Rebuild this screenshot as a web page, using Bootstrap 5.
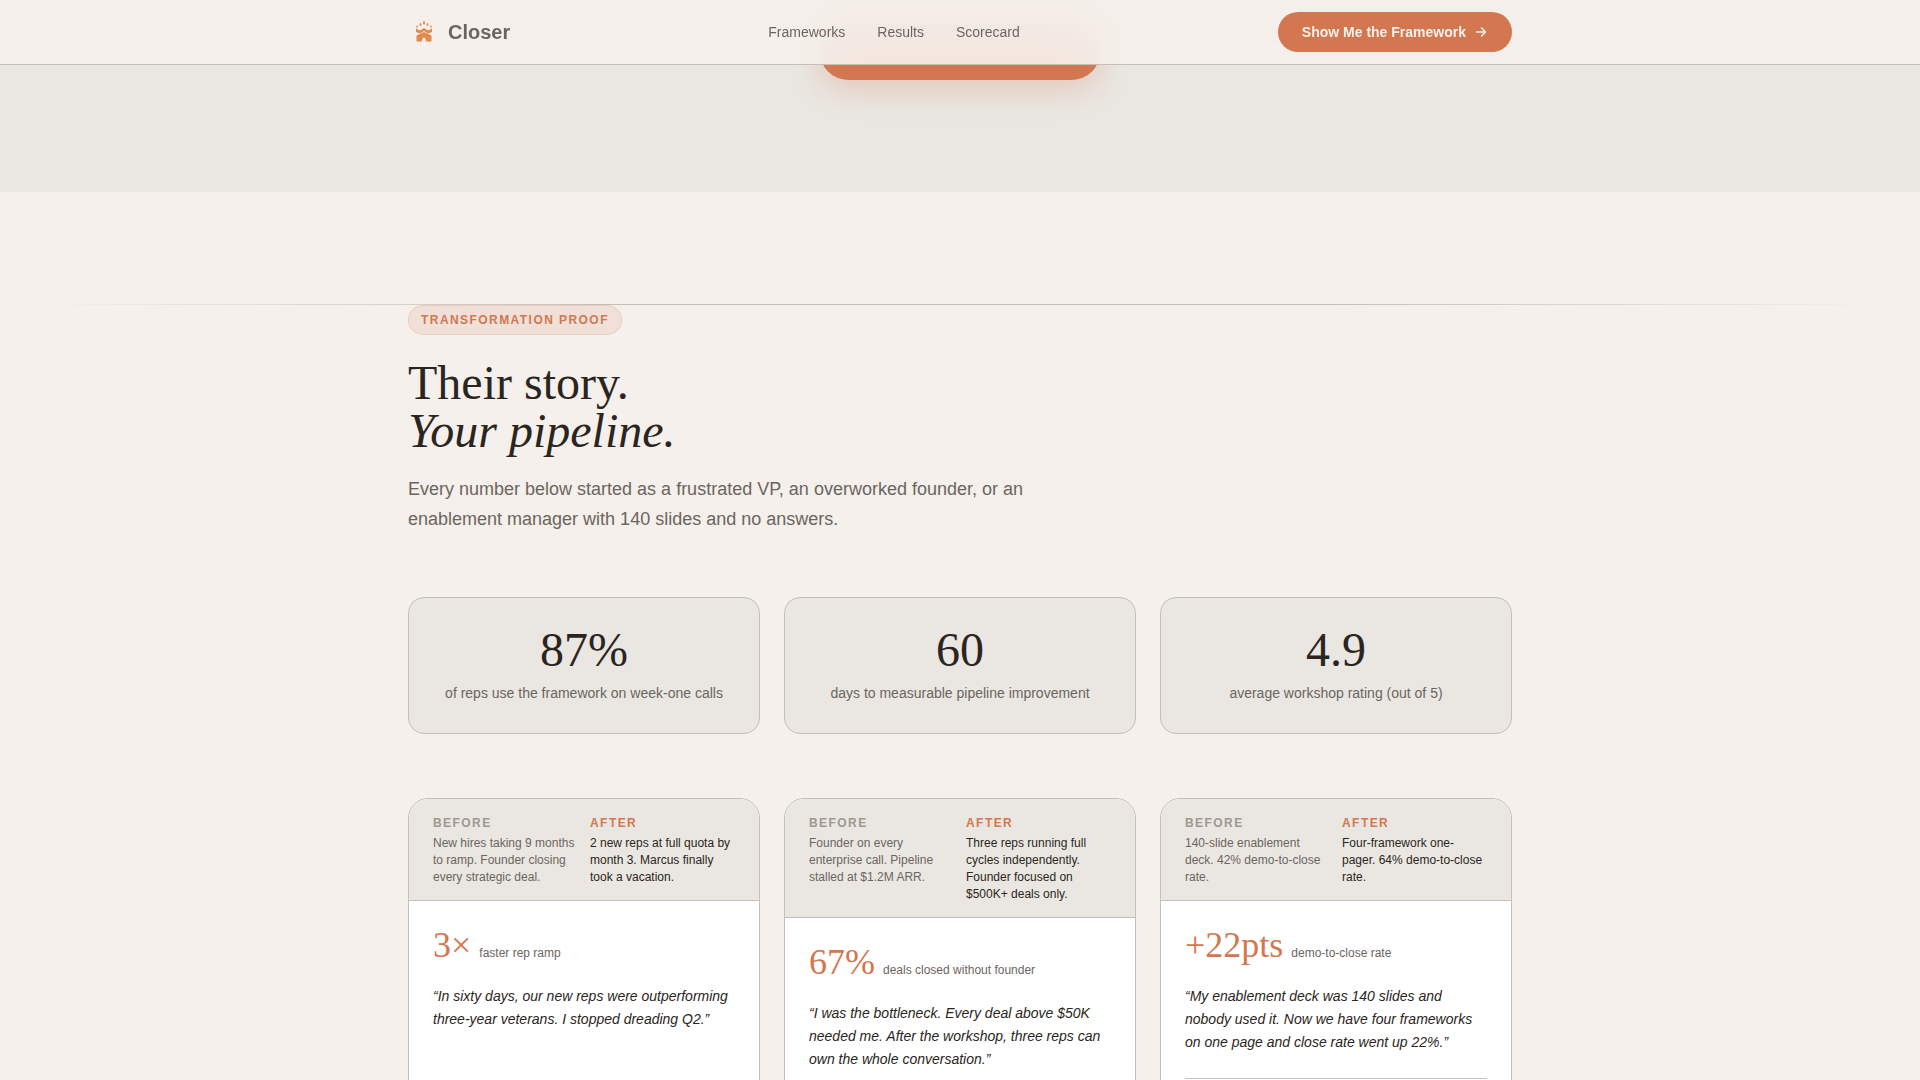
<!DOCTYPE html>
<html lang="en">
<head>
    <meta charset="UTF-8">
    <meta name="viewport" content="width=device-width, initial-scale=1.0">
    <title>Closer - Transformation Proof</title>
    <link href="https://cdn.jsdelivr.net/npm/bootstrap@5.3.0/dist/css/bootstrap.min.css" rel="stylesheet">
    <style>
        body {
            font-family: "Liberation Sans", Arial, sans-serif;
            background-color: #f5f0eb;
            color: #2a2520;
        }
        .shell {
            width: 1104px;
            margin: 0 auto;
        }
        .top-nav {
            height: 65px;
            background: rgba(245, 240, 235, 0.92);
            backdrop-filter: blur(20px);
            border-bottom: 1px solid #c4bfb8;
        }
        .brand-name {
            font-size: 20px;
            font-weight: 700;
            color: #6b6560;
        }
        .nav-item-link {
            font-size: 14px;
            color: #6b6560;
            text-decoration: none;
        }
        .nav-links {
            gap: 32px;
        }
        .nav-cta {
            height: 40px;
            padding: 0 24px;
            font-size: 14px;
            font-weight: 700;
            color: #f5f0eb;
            background: #d27750;
            border-radius: 100px;
            text-decoration: none;
        }
        .hero-band {
            height: 192px;
            padding-top: 24px;
            background: #eae7e2;
        }
        .hero-btn {
            width: 280px;
            height: 56px;
            background: #d27750;
            border-radius: 100px;
            box-shadow: 0 8px 32px rgba(210, 119, 80, 0.3);
        }
        .proof-section {
            padding-top: 112px;
        }
        .fade-line {
            height: 1px;
            margin: 0 40px;
            background: linear-gradient(90deg, transparent, #c4bfb8 30%, #c4bfb8 70%, transparent);
        }
        .proof-tag {
            display: block;
            width: fit-content;
            padding: 0 12px;
            height: 30px;
            line-height: 28px;
            font-size: 12px;
            font-weight: 700;
            letter-spacing: 1.44px;
            color: #d27750;
            background: rgba(210, 119, 80, 0.12);
            border: 1px solid rgba(210, 119, 80, 0.2);
            border-radius: 100px;
        }
        .proof-title {
            margin: 24px 0 0;
            font-family: "Liberation Serif", "Times New Roman", serif;
            font-size: 48px;
            font-weight: 400;
            line-height: 48px;
        }
        .proof-lead {
            width: 640px;
            margin: 20px 0 0;
            font-size: 18px;
            line-height: 29.7px;
            color: #6b6560;
        }
        .stat-row {
            margin-top: 63px;
            gap: 24px;
        }
        .stat-tile {
            flex: 1 1 0;
            height: 137px;
            padding-top: 28px;
            text-align: center;
            background: #eae7e2;
            border: 1px solid #c4bfb8;
            border-radius: 16px;
        }
        .stat-num {
            font-family: "Liberation Serif", "Times New Roman", serif;
            font-size: 48px;
            line-height: 48px;
        }
        .stat-cap {
            margin-top: 8px;
            font-size: 14px;
            line-height: 22px;
            color: #6b6560;
        }
        .story-row {
            margin-top: 64px;
            gap: 24px;
            align-items: stretch;
        }
        .story-card {
            flex: 1 1 0;
            min-width: 0;
            overflow: hidden;
            background: #fff;
            border: 1px solid #c4bfb8;
            border-radius: 20px;
        }
        .story-compare {
            display: grid;
            grid-template-columns: 1fr 1fr;
            gap: 12px;
            padding: 17px 24px 14px;
            background: #eae7e2;
            border-bottom: 1px solid #c4bfb8;
        }
        .compare-label {
            margin-bottom: 5px;
            font-size: 12px;
            line-height: 14px;
            font-weight: 700;
            letter-spacing: 1.44px;
            color: #9e9890;
        }
        .compare-label.is-after {
            color: #d27750;
        }
        .compare-text {
            font-size: 12px;
            line-height: 16.8px;
            color: #6b6560;
        }
        .compare-text.is-after {
            color: #2a2520;
        }
        .story-body {
            padding: 24px;
        }
        .story-metric {
            gap: 8px;
        }
        .metric-num {
            font-family: "Liberation Serif", "Times New Roman", serif;
            font-size: 36px;
            line-height: 40px;
            color: #d27750;
        }
        .metric-cap {
            font-size: 12px;
            color: #6b6560;
        }
        .story-quote {
            margin: 20px 0 0;
            font-size: 14px;
            font-style: italic;
            line-height: 23.1px;
        }
        .story-foot {
            margin-top: 24px;
            height: 64px;
            border-top: 1px solid #c4bfb8;
        }
    </style>
</head>
<body>
    <nav class="top-nav fixed-top">
        <div class="shell h-100 d-flex align-items-center justify-content-between">
            <a class="d-flex align-items-center gap-2 text-decoration-none" href="#">
                <svg width="32" height="32" viewBox="-7 -4.500 32 32" fill="#e08a4e">
                    <path d="M9 0c.7 1.100 1 2.100 1 3a1 1 0 0 1-2 0c0-.9.300-1.900 1-3z"/>
                    <path d="M5.500 2c.6.900.9 1.700.9 2.500a.9.900 0 0 1-1.800 0c0-.8.300-1.600.9-2.500z"/>
                    <path d="M12.500 2c.6.900.9 1.700.9 2.500a.9.900 0 0 1-1.800 0c0-.8.300-1.600.9-2.500z"/>
                    <path d="M2 4.500c.5.700.8 1.300.8 1.900a.8.800 0 0 1-1.600 0c0-.6.300-1.200.8-1.900z"/>
                    <path d="M16 4.500c.5.700.8 1.300.8 1.900a.8.800 0 0 1-1.600 0c0-.6.300-1.200.8-1.900z"/>
                    <path d="M1 8l4 2 4-2.500 4 2.500 4-2v3.500L13 13l-4-2.500L5 13l-4-1.500z"/>
                    <path d="M9 11.500l7.500 3.500V21H11c0-2-.7-3.200-2-4.200C7.700 17.800 7 19 7 21H1.500v-6z"/>
                </svg>
                <span class="brand-name">Closer</span>
            </a>
            <div class="nav-links d-flex">
                <a class="nav-item-link" href="#">Frameworks</a>
                <a class="nav-item-link" href="#">Results</a>
                <a class="nav-item-link" href="#">Scorecard</a>
            </div>
            <a class="nav-cta d-flex align-items-center gap-2" href="#">
                Show Me the Framework
                <svg width="14" height="14" viewBox="0 0 14 14" fill="none" stroke="currentColor" stroke-width="1.6" stroke-linecap="round" stroke-linejoin="round">
                    <path d="M2.500 7h9M7.500 3l4 4-4 4"/>
                </svg>
            </a>
        </div>
    </nav>

    <div class="hero-band d-flex justify-content-center">
        <div class="hero-btn"></div>
    </div>

    <section class="proof-section">
        <div class="fade-line"></div>
        <div class="shell">
            <span class="proof-tag">TRANSFORMATION PROOF</span>
            <h2 class="proof-title">Their story.<br><em>Your pipeline.</em></h2>
            <p class="proof-lead">Every number below started as a frustrated VP, an overworked founder, or an enablement manager with 140 slides and no answers.</p>

            <div class="stat-row d-flex">
                <div class="stat-tile">
                    <div class="stat-num">87%</div>
                    <div class="stat-cap">of reps use the framework on week-one calls</div>
                </div>
                <div class="stat-tile">
                    <div class="stat-num">60</div>
                    <div class="stat-cap">days to measurable pipeline improvement</div>
                </div>
                <div class="stat-tile">
                    <div class="stat-num">4.9</div>
                    <div class="stat-cap">average workshop rating (out of 5)</div>
                </div>
            </div>

            <div class="story-row d-flex">
                <div class="story-card">
                    <div class="story-compare">
                        <div>
                            <div class="compare-label">BEFORE</div>
                            <div class="compare-text">New hires taking 9 months to ramp. Founder closing every strategic deal.</div>
                        </div>
                        <div>
                            <div class="compare-label is-after">AFTER</div>
                            <div class="compare-text is-after">2 new reps at full quota by month 3. Marcus finally took a vacation.</div>
                        </div>
                    </div>
                    <div class="story-body">
                        <div class="story-metric d-flex align-items-baseline">
                            <span class="metric-num">3×</span>
                            <span class="metric-cap">faster rep ramp</span>
                        </div>
                        <p class="story-quote">“In sixty days, our new reps were outperforming three-year veterans. I stopped dreading Q2.”</p>
                    </div>
                </div>
                <div class="story-card">
                    <div class="story-compare">
                        <div>
                            <div class="compare-label">BEFORE</div>
                            <div class="compare-text">Founder on every enterprise call. Pipeline stalled at $1.2M ARR.</div>
                        </div>
                        <div>
                            <div class="compare-label is-after">AFTER</div>
                            <div class="compare-text is-after">Three reps running full cycles independently. Founder focused on $500K+ deals only.</div>
                        </div>
                    </div>
                    <div class="story-body">
                        <div class="story-metric d-flex align-items-baseline">
                            <span class="metric-num">67%</span>
                            <span class="metric-cap">deals closed without founder</span>
                        </div>
                        <p class="story-quote">“I was the bottleneck. Every deal above $50K needed me. After the workshop, three reps can own the whole conversation.”</p>
                        <div class="story-foot"></div>
                    </div>
                </div>
                <div class="story-card">
                    <div class="story-compare">
                        <div>
                            <div class="compare-label">BEFORE</div>
                            <div class="compare-text">140-slide enablement deck. 42% demo-to-close rate.</div>
                        </div>
                        <div>
                            <div class="compare-label is-after">AFTER</div>
                            <div class="compare-text is-after">Four-framework one-pager. 64% demo-to-close rate.</div>
                        </div>
                    </div>
                    <div class="story-body">
                        <div class="story-metric d-flex align-items-baseline">
                            <span class="metric-num">+22pts</span>
                            <span class="metric-cap">demo-to-close rate</span>
                        </div>
                        <p class="story-quote">“My enablement deck was 140 slides and nobody used it. Now we have four frameworks on one page and close rate went up 22%.”</p>
                        <div class="story-foot"></div>
                    </div>
                </div>
            </div>
        </div>
    </section>

    <script src="https://cdn.jsdelivr.net/npm/bootstrap@5.3.0/dist/js/bootstrap.bundle.min.js"></script>
</body>
</html>
